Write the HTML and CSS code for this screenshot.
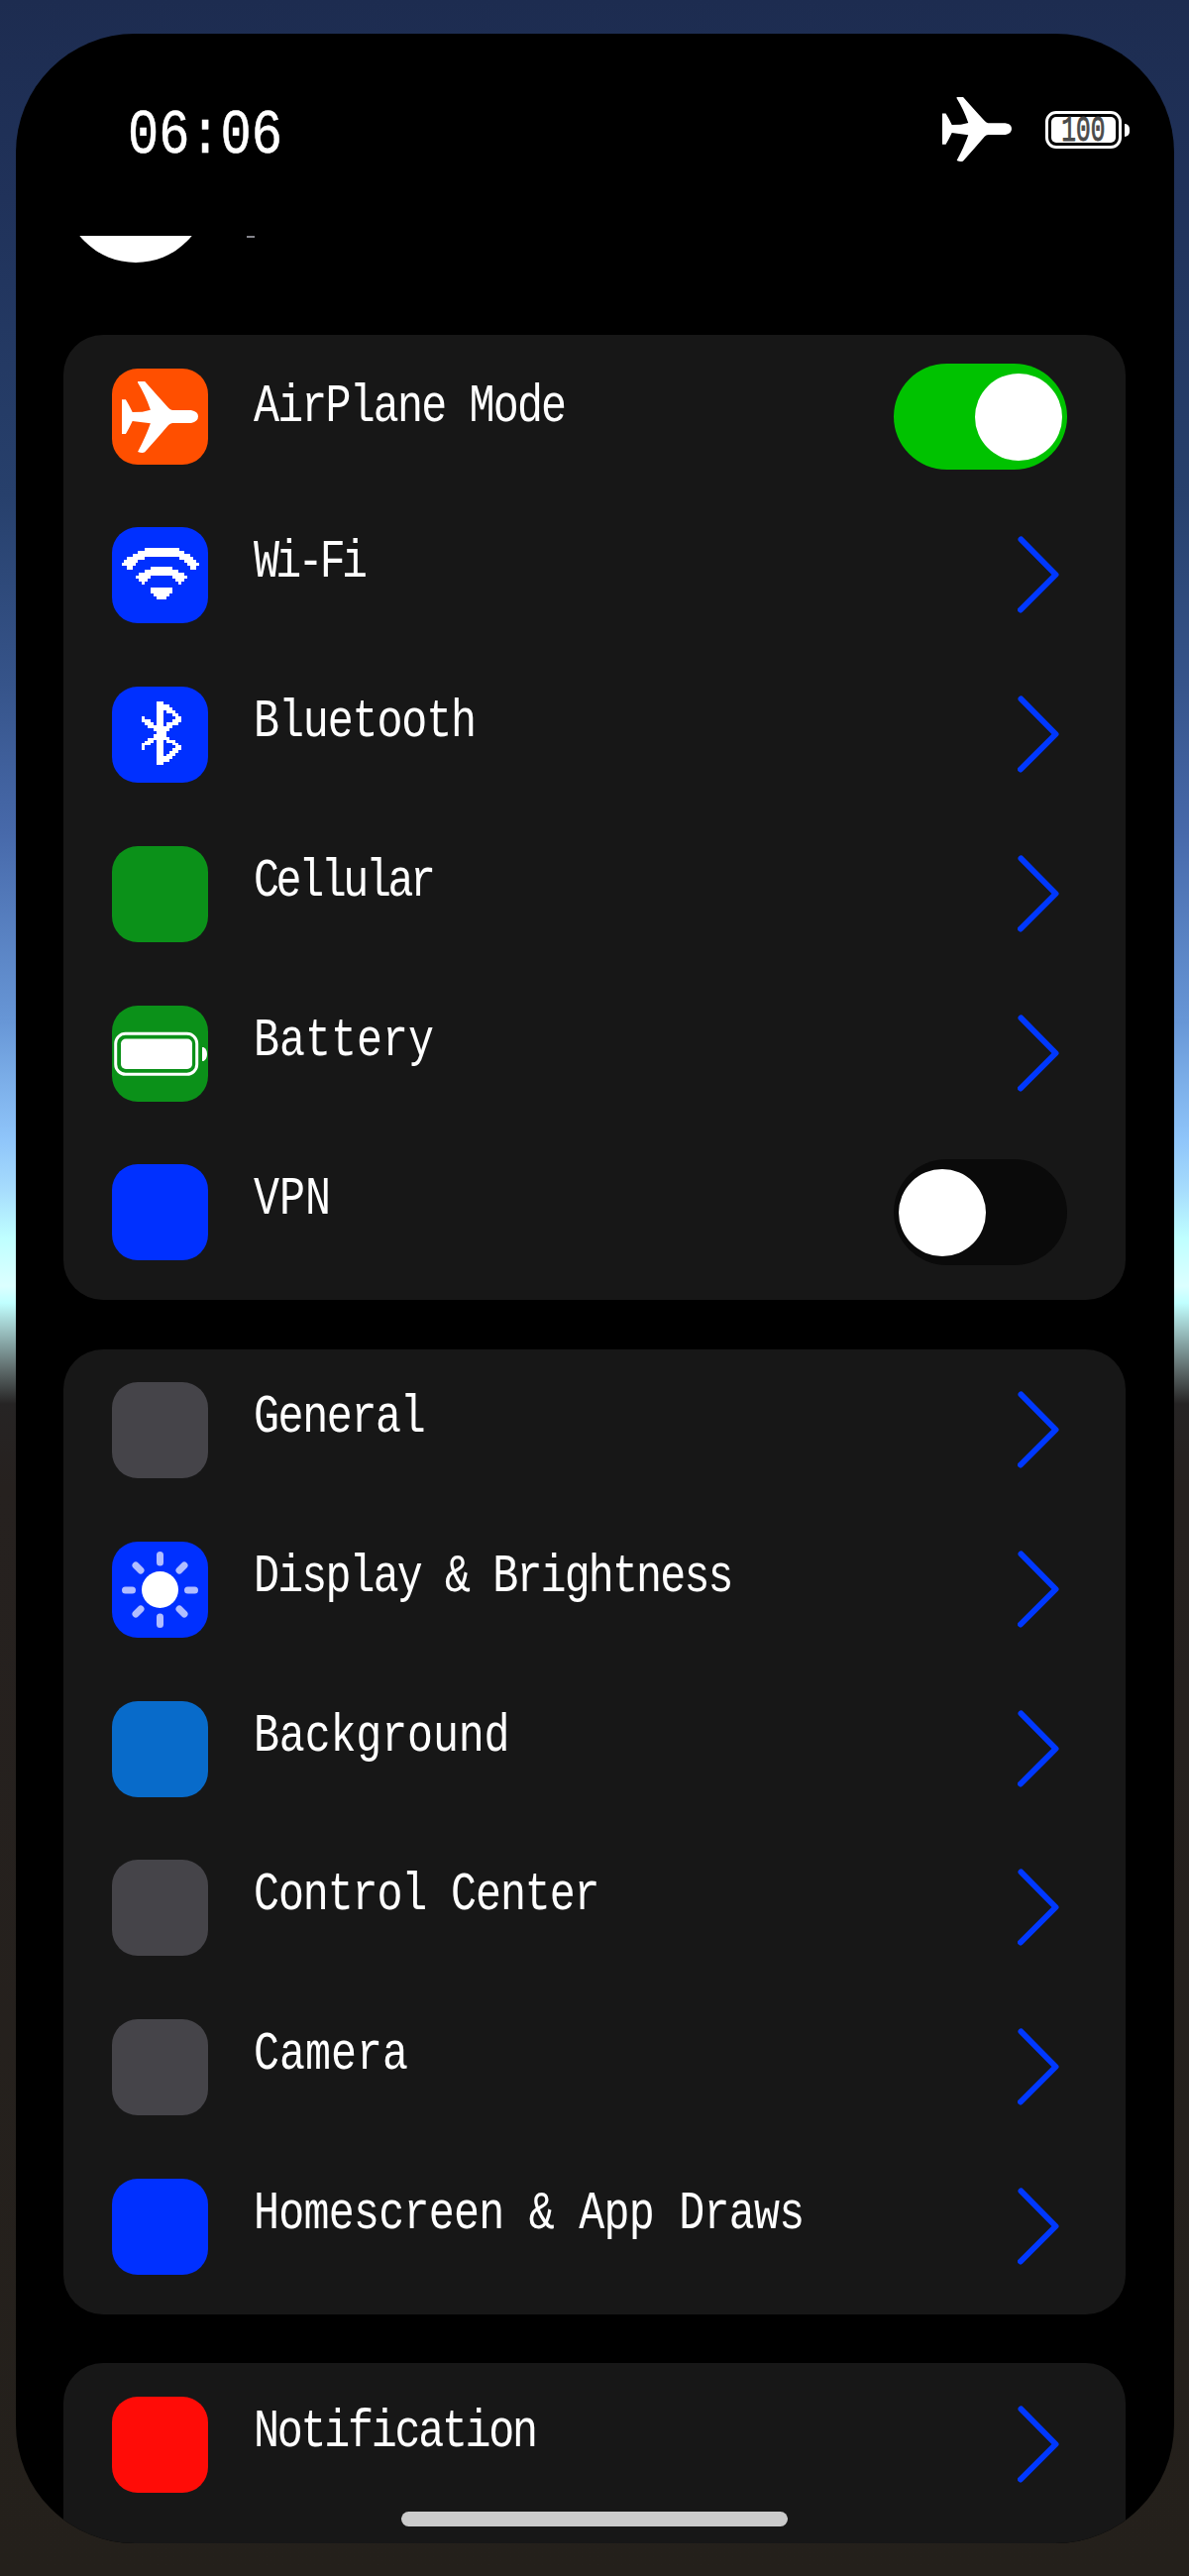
FILE: index.html
```html
<!DOCTYPE html>
<html lang="en">
<head>
<meta charset="utf-8">
<title>Settings</title>
<link rel="stylesheet" href="styles.css">
</head>
<body>
<svg class="defs" aria-hidden="true">
  <symbol id="plane" viewBox="204 195 216 216" preserveAspectRatio="none">
    <path d="M204 250H215Q224 266 234 288L262 287L285 281Q270 235 249 199L249 195H269Q306 240 336 275Q341 281 347 282H400Q420 286 420 301Q420 316 400 321H347Q341 322 336 327Q306 365 269 409Q262 413 249 408Q272 362 285 322L262 319L234 315Q224 338 215 354H204Z"/>
  </symbol>
  <symbol id="chevron" viewBox="0 0 42 78">
    <path d="M3.500 3.500L38.500 39L3 74.500" fill="none" stroke="#0038ff" stroke-width="6" stroke-linecap="round" stroke-linejoin="round"/>
  </symbol>
</svg>
<main class="phone">
  <header class="status">
    <div class="clock">06:06</div>
    <div class="indicators">
      <svg class="status-plane"><use href="#plane"/></svg>
      <div class="battery"><div class="cell"><div class="charge"><span>100</span></div></div><i class="nub"></i></div>
    </div>
  </header>
  <section class="scroll">
    <div class="profile"><div class="avatar"></div><div class="tail"></div></div>

    <div class="card">
      <div class="row first">
        <div class="icon orange"><svg class="plane-icon"><use href="#plane"/></svg></div>
        <span class="label t-airplane">AirPlane Mode</span>
        <div class="toggle on"><i></i></div>
      </div>
      <div class="row">
        <div class="icon blue">
          <svg class="fill" viewBox="176 639 272 291" preserveAspectRatio="none" shape-rendering="crispEdges">
            <path d="M268 702H366V711H382V720H398V729H406V738H414V747H423V757H414V767H398V757H390V748H382V738H366V729H268V738H250V748H243V757H236V767H218V757H203V747H210V738H218V729H234V720H250V711H268Z"/>
            <path d="M285 758H348V767H364V776H380V786H389V796H380V803H373V812H364V803H356V794H348V785H285V794H277V803H269V812H260V803H252V796H244V786H252V776H268V767H285Z"/>
            <path d="M286 822H347V839H338V849H330V858H302V849H294V839H286Z"/>
          </svg>
        </div>
        <span class="label t-wifi">Wi-Fi</span>
        <svg class="chevron"><use href="#chevron"/></svg>
      </div>
      <div class="row">
        <div class="icon blue">
          <svg class="fill" viewBox="176 1122 272 291" preserveAspectRatio="none" shape-rendering="crispEdges">
            <path d="M302 1167H321V1176H338V1185H347V1194H356V1203H364V1212H372V1230H364V1239H347V1248H338V1258H330V1274H338V1283H356V1292H364V1298H372V1313H364V1322H356V1331H347V1340H338V1349H321V1359H302V1283H294V1292H286V1300H269V1313H260V1294H269V1286H277V1277H294V1267H302V1258H294V1249H277V1239H269V1230H260V1212H269V1221H286V1230H294V1239H302Z"/>
            <path class="hole" d="M321 1194H330V1203H347V1212H356V1221H347V1230H330V1242H321ZM321 1283H330V1292H347V1300H356V1307H347V1316H338V1325H330V1332H321Z"/>
          </svg>
        </div>
        <span class="label t-bluetooth">Bluetooth</span>
        <svg class="chevron"><use href="#chevron"/></svg>
      </div>
      <div class="row">
        <div class="icon green"></div>
        <span class="label t-cellular">Cellular</span>
        <svg class="chevron"><use href="#chevron"/></svg>
      </div>
      <div class="row">
        <div class="icon green">
          <svg class="fill" viewBox="0 0 97 97">
            <rect x="3.700" y="28.300" width="82" height="41" rx="10" fill="none" stroke="#fff" stroke-width="3"/>
            <rect x="9" y="33.500" width="72" height="30.500" rx="5"/>
            <path d="M91 42H92.500Q96 44 96 49T92.500 56H91Z"/>
          </svg>
        </div>
        <span class="label">Battery</span>
        <svg class="chevron"><use href="#chevron"/></svg>
      </div>
      <div class="row">
        <div class="icon blue"></div>
        <span class="label">VPN</span>
        <div class="toggle"><i></i></div>
      </div>
    </div>

    <div class="card">
      <div class="row">
        <div class="icon gray"></div>
        <span class="label t-general">General</span>
        <svg class="chevron"><use href="#chevron"/></svg>
      </div>
      <div class="row">
        <div class="icon blue">
          <svg class="fill" viewBox="0 0 97 97">
            <circle cx="48.500" cy="48.500" r="18.500"/>
            <path d="M48.500 13.500V21M48.500 76V83.500M13.500 49H20.500M76.500 49H83.500M24 24L29 29M73 24L68 29M24 73L29 68M73 73L68 68" stroke="#b0bdff" stroke-width="7" stroke-linecap="round"/>
          </svg>
        </div>
        <span class="label t-display">Display &amp; Brightness</span>
        <svg class="chevron"><use href="#chevron"/></svg>
      </div>
      <div class="row">
        <div class="icon azure"></div>
        <span class="label t-background">Background</span>
        <svg class="chevron"><use href="#chevron"/></svg>
      </div>
      <div class="row">
        <div class="icon gray"></div>
        <span class="label t-control">Control Center</span>
        <svg class="chevron"><use href="#chevron"/></svg>
      </div>
      <div class="row">
        <div class="icon gray"></div>
        <span class="label">Camera</span>
        <svg class="chevron"><use href="#chevron"/></svg>
      </div>
      <div class="row">
        <div class="icon blue"></div>
        <span class="label t-home">Homescreen &amp; App Draws</span>
        <svg class="chevron"><use href="#chevron"/></svg>
      </div>
    </div>

    <div class="card">
      <div class="row">
        <div class="icon red"></div>
        <span class="label t-notification">Notification</span>
        <svg class="chevron"><use href="#chevron"/></svg>
      </div>
    </div>
  </section>
  <div class="home-bar"></div>
</main>
</body>
</html>
```

FILE: styles.css
```css
* { box-sizing: border-box; }
body {
  margin: 0;
  width: 1200px;
  height: 2600px;
  padding: 34px 15px 33px 16px;
  overflow: hidden;
  background: linear-gradient(#1d2c50 0, #20325a 200px, #27406c 500px, #36548a 690px, #4769aa 840px, #6796d6 1030px, #8fc5fa 1150px, #a6dcfd 1200px, #bfffff 1250px, #dcffff 1298px, #c0ffff 1315px, #9fc8c8 1340px, #627070 1380px, #262424 1417px, #26211f 1500px, #24201b 2600px);
  font-family: "Liberation Mono", monospace;
  color: #fff;
}
.defs { position: absolute; width: 0; height: 0; }
.phone {
  position: relative;
  width: 1169px;
  height: 2533px;
  border-radius: 120px;
  background: #000;
  overflow: hidden;
}
.status {
  height: 204px;
  display: flex;
  justify-content: space-between;
  padding: 64px 45px 0 113px;
}
.clock {
  width: 155px;
  height: 76px;
  margin-top: 2px;
  font-size: 63px;
  line-height: 76px;
  transform: scaleX(.825);
  transform-origin: left;
  -webkit-text-stroke: .6px #fff;
}
.indicators { display: flex; gap: 34px; }
.status-plane { width: 70px; height: 65px; fill: #fff; }
.battery { display: flex; align-items: center; gap: 3px; height: 38px; margin-top: 14px; }
.cell { width: 77px; height: 38px; padding: 3px; border: 3px solid #fff; border-radius: 11px; }
.charge {
  height: 26px;
  border-radius: 5px;
  background: #fff;
  color: #4a4a4a;
  font-size: 37px;
  line-height: 29px;
  display: flex;
  justify-content: center;
}
.charge span { transform: scaleX(.66); -webkit-text-stroke: 1px #4a4a4a; }
.nub { width: 5px; height: 13px; background: #fff; border-radius: 0 5px 5px 0; }

.scroll { height: 2329px; overflow: hidden; padding: 0 49px 0 48px; }
.profile { display: flex; height: 100px; }
.avatar { width: 146px; height: 146px; margin-top: -119px; border-radius: 50%; background: #fff; }
.tail { width: 8px; height: 2px; margin-left: 39px; background: #85858d; }

.card {
  height: 974px;
  margin-bottom: 49.500px;
  border-radius: 40px;
  background: #171717;
}
.row {
  height: 160.800px;
  display: flex;
  padding: 33.500px 36px 0 49px;
}
.icon {
  width: 97px;
  height: 97px;
  border-radius: 26px;
  flex: none;
}
.icon svg { display: block; fill: #fff; }
.fill { width: 97px; height: 97px; }
.plane-icon { width: 77px; height: 72px; margin: 13px 0 0 10px; }
.orange { background: #ff4f00; }
.blue { background: #0030ff; }
.green { background: #0b9119; }
.gray { background: #454449; }
.azure { background: #086bca; }
.red { background: #ff0c07; }
.hole { fill: #0030ff; }

.label {
  flex: 1;
  min-width: 0;
  height: 62px;
  margin: 5px 0 0 46px;
  font-size: 54.500px;
  line-height: 62px;
  white-space: nowrap;
  transform: scaleX(.795);
  transform-origin: left;
}
.first .label { margin-top: 8px; }
.t-airplane { letter-spacing: -2.300px; }
.t-wifi { letter-spacing: -4.700px; }
.t-bluetooth { letter-spacing: -1.400px; }
.t-cellular { letter-spacing: -4.300px; }
.t-general { letter-spacing: -1.750px; }
.t-display { letter-spacing: -2.350px; }
.t-background { letter-spacing: -.200px; }
.t-control { letter-spacing: -1.400px; }
.t-home { letter-spacing: -.950px; }
.t-notification { letter-spacing: -2.850px; }

.chevron { width: 42px; height: 78px; margin: 9px 31px 0 0; flex: none; }
.toggle {
  width: 175px;
  height: 107px;
  margin: -5px 0 0;
  padding: 10px 5px;
  border-radius: 54px;
  background: #0a0a0a;
  display: flex;
  flex: none;
}
.toggle i { width: 88px; height: 88px; border-radius: 50%; background: #fff; }
.toggle.on { background: #00c200; justify-content: flex-end; }
.row:has(.toggle) { padding-right: 59px; }

.home-bar {
  position: absolute;
  left: 389px;
  bottom: 17px;
  width: 390px;
  height: 15px;
  border-radius: 8px;
  background: #cbcbcb;
}
```
